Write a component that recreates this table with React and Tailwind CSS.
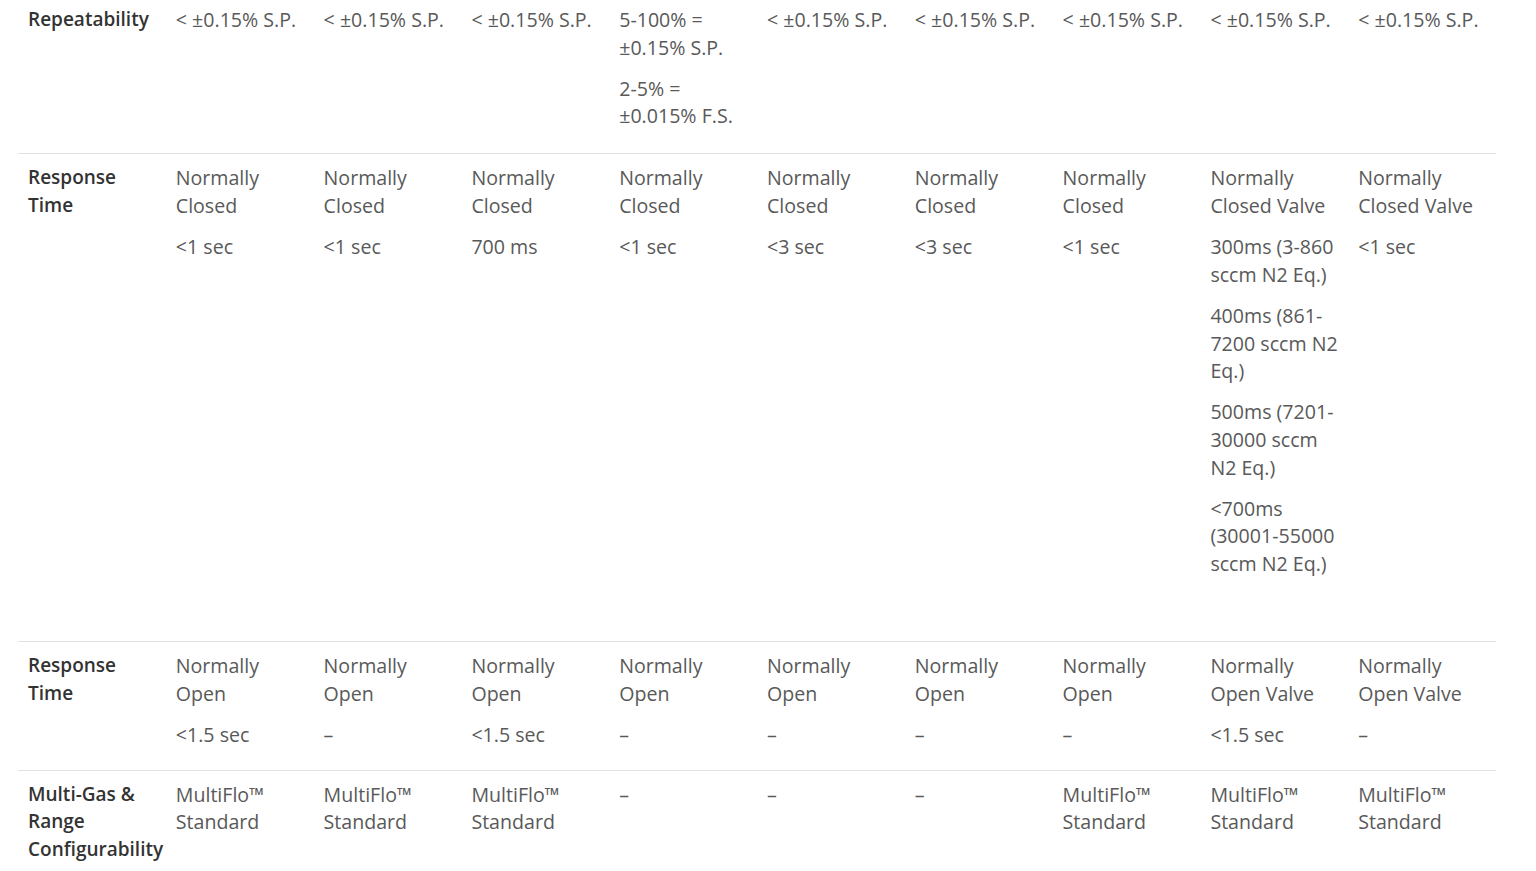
import React from "react";

const rows = [
  {
    label: ["Repeatability"],
    pad: "pt-[6px] pb-[10px]",
    cells: [
      [["< ±0.15% S.P."]],
      [["< ±0.15% S.P."]],
      [["< ±0.15% S.P."]],
      [["5-100% =", "±0.15% S.P."], ["2-5% =", "±0.015% F.S."]],
      [["< ±0.15% S.P."]],
      [["< ±0.15% S.P."]],
      [["< ±0.15% S.P."]],
      [["< ±0.15% S.P."]],
      [["< ±0.15% S.P."]],
    ],
  },
  {
    label: ["Response", "Time"],
    pad: "pt-[10px] pb-[9px]",
    cells: [
      [["Normally", "Closed"], ["<1 sec"]],
      [["Normally", "Closed"], ["<1 sec"]],
      [["Normally", "Closed"], ["700 ms"]],
      [["Normally", "Closed"], ["<1 sec"]],
      [["Normally", "Closed"], ["<3 sec"]],
      [["Normally", "Closed"], ["<3 sec"]],
      [["Normally", "Closed"], ["<1 sec"]],
      [
        ["Normally", "Closed Valve"],
        ["300ms (3-860", "sccm N2 Eq.)"],
        ["400ms (861-", "7200 sccm N2", "Eq.)"],
        ["500ms (7201-", "30000 sccm", "N2 Eq.)"],
        ["<700ms", "(30001-55000", "sccm N2 Eq.)"],
        [""],
      ],
      [["Normally", "Closed Valve"], ["<1 sec"]],
    ],
  },
  {
    label: ["Response", "Time"],
    pad: "pt-[10px] pb-[8px]",
    cells: [
      [["Normally", "Open"], ["<1.5 sec"]],
      [["Normally", "Open"], ["–"]],
      [["Normally", "Open"], ["<1.5 sec"]],
      [["Normally", "Open"], ["–"]],
      [["Normally", "Open"], ["–"]],
      [["Normally", "Open"], ["–"]],
      [["Normally", "Open"], ["–"]],
      [["Normally", "Open Valve"], ["<1.5 sec"]],
      [["Normally", "Open Valve"], ["–"]],
    ],
  },
  {
    label: ["Multi-Gas &", "Range", "Configurability"],
    pad: "pt-[10px] pb-[8px]",
    noBorder: true,
    cells: [
      [["MultiFlo™", "Standard"]],
      [["MultiFlo™", "Standard"]],
      [["MultiFlo™", "Standard"]],
      [["–"]],
      [["–"]],
      [["–"]],
      [["MultiFlo™", "Standard"]],
      [["MultiFlo™", "Standard"]],
      [["MultiFlo™", "Standard"]],
    ],
  },
];

function Para({ lines }) {
  return (
    <p className="mb-[13.3px] min-h-[27.7px] leading-[27.7px] whitespace-nowrap">
      {lines.map((l, i) => (
        <React.Fragment key={i}>
          {i > 0 && <br />}
          {l}
        </React.Fragment>
      ))}
    </p>
  );
}

export default function App() {
  return (
    <div
      className="w-[1536px] h-[871px] overflow-hidden bg-white"
      style={{ fontFamily: "'Open Sans', Lato, sans-serif" }}
    >
      <div className="ml-[18px] w-[1478px]">
        {rows.map((row, ri) => (
          <div
            key={ri}
            className={
              "grid grid-cols-10 " +
              (row.noBorder ? "" : "border-b border-[#e3e3e3]")
            }
          >
            <div className={"px-[10px] " + row.pad}>
              <p className="mb-[13.3px] text-[19px] leading-[27.7px] font-semibold text-[#333333] whitespace-nowrap">
                {row.label.map((l, i) => (
                  <React.Fragment key={i}>
                    {i > 0 && <br />}
                    {l}
                  </React.Fragment>
                ))}
              </p>
            </div>
            {row.cells.map((cell, ci) => (
              <div
                key={ci}
                className={"px-[10px] text-[19.6px] text-[#595959] " + row.pad}
              >
                {cell.map((p, pi) => (
                  <Para key={pi} lines={p} />
                ))}
              </div>
            ))}
          </div>
        ))}
      </div>
    </div>
  );
}
